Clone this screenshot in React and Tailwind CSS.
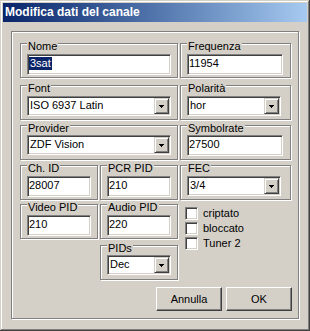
import React from 'react';

const sunken =
  'border border-t-[#808080] border-l-[#808080] border-b-white border-r-white shadow-[inset_1px_1px_0_#404040,inset_-1px_-1px_0_#d4d0c8] bg-white';
const etched = 'border border-[#808080] shadow-[1px_1px_0_#fff,inset_1px_1px_0_#fff]';

function Group({ label, className = '', children }) {
  return (
    <div className={`relative h-[35px] ${etched} ${className}`}>
      <span className="absolute top-[-4px] left-[6px] px-[1px] bg-[#d4d0c8] leading-[13px]">
        {label}
      </span>
      {children}
    </div>
  );
}

function Field({ children }) {
  return (
    <div className={`${sunken} h-[21px] pl-[1px] pt-[2px] leading-[13px] whitespace-nowrap`}>
      {children}
    </div>
  );
}

function Combo({ value }) {
  return (
    <div className={`${sunken} h-[20px] p-[1px] flex`}>
      <div className="flex-1 pl-[1px] pt-[1px] leading-[13px] whitespace-nowrap">{value}</div>
      <div className="w-[15px] h-full bg-[#d4d0c8] border border-t-[#d4d0c8] border-l-[#d4d0c8] border-b-[#404040] border-r-[#404040] shadow-[inset_1px_1px_0_#fff,inset_-1px_-1px_0_#808080] flex items-center justify-center">
        <svg width="5" height="3" viewBox="0 0 5 3" shapeRendering="crispEdges">
          <path d="M0 0h5v1h-1v1h-1v1h-1v-1h-1v-1h-1z" fill="#000" />
        </svg>
      </div>
    </div>
  );
}

function Check({ label }) {
  return (
    <div className="flex items-center gap-[5px] h-[13px]">
      <div className={`${sunken} w-[13px] h-[13px]`} />
      <span className="leading-[13px]">{label}</span>
    </div>
  );
}

function Button({ children }) {
  return (
    <div className="w-[66px] h-[24px] bg-[#d4d0c8] border border-t-white border-l-white border-b-[#404040] border-r-[#404040] shadow-[inset_-1px_-1px_0_#808080] flex items-center justify-center">
      {children}
    </div>
  );
}

export default function App() {
  return (
    <div className="w-[310px] h-[331px] bg-[#d4d0c8] p-[3px] shadow-[inset_-1px_-1px_0_#404040,inset_1px_1px_0_#d4d0c8,inset_-2px_-2px_0_#808080,inset_2px_2px_0_#fff] font-['Liberation_Sans',Arial,sans-serif] text-[11px] text-black">
      <div className="h-[19px] bg-linear-to-r from-[#0a246a] to-[#a6caf0] pl-[2px] text-white font-bold text-[12px] leading-[19px]">
        Modifica dati del canale
      </div>

      <div className={`mt-[9px] ml-[8px] w-[288px] h-[288px] ${etched} pl-[8px] pt-[11px]`}>
        <div className="flex gap-[2px]">
          <Group label="Nome" className="w-[158px] px-[6px] pt-[10px]">
            <Field>
              <span className="inline-block bg-[#0a246a] text-white px-[1px]">3sat</span>
            </Field>
          </Group>
          <Group label="Frequenza" className="w-[111px] pl-[6px] pr-[7px] pt-[10px]">
            <Field>11954</Field>
          </Group>
        </div>

        <div className="flex gap-[2px] mt-[7px]">
          <Group label="Font" className="w-[158px] px-[6px] pt-[10px]">
            <Combo value="ISO 6937 Latin" />
          </Group>
          <Group label="Polarità" className="w-[111px] pl-[6px] pr-[9px] pt-[10px]">
            <Combo value="hor" />
          </Group>
        </div>

        <div className="flex gap-[2px] mt-[5px]">
          <Group label="Provider" className="w-[158px] px-[6px] pt-[9px]">
            <Combo value="ZDF Vision" />
          </Group>
          <Group label="Symbolrate" className="w-[111px] pl-[6px] pr-[7px] pt-[9px]">
            <Field>27500</Field>
          </Group>
        </div>

        <div className="flex gap-[2px] mt-[5px]">
          <Group label="Ch. ID" className="w-[78px] px-[6px] pt-[10px]">
            <Field>28007</Field>
          </Group>
          <Group label="PCR PID" className="w-[78px] px-[6px] pt-[10px]">
            <Field>210</Field>
          </Group>
          <Group label="FEC" className="w-[111px] pl-[6px] pr-[9px] pt-[10px]">
            <Combo value="3/4" />
          </Group>
        </div>

        <div className="flex gap-[2px] mt-[4px]">
          <div className="w-[158px]">
            <div className="flex gap-[2px]">
              <Group label="Video PID" className="w-[78px] px-[6px] pt-[10px]">
                <Field>210</Field>
              </Group>
              <Group label="Audio PID" className="w-[78px] px-[6px] pt-[10px]">
                <Field>220</Field>
              </Group>
            </div>
            <div className="mt-[6px] ml-[80px]">
              <Group label="PIDs" className="w-[78px] px-[6px] pt-[9px]">
                <Combo value="Dec" />
              </Group>
            </div>
          </div>
          <div className="w-[111px] pl-[5px] pt-[3px] flex flex-col gap-[2px]">
            <Check label="criptato" />
            <Check label="bloccato" />
            <Check label="Tuner 2" />
          </div>
        </div>

        <div className="w-[272px] mt-[7px] flex justify-end gap-[4px]">
          <Button>Annulla</Button>
          <Button>OK</Button>
        </div>
      </div>
    </div>
  );
}
